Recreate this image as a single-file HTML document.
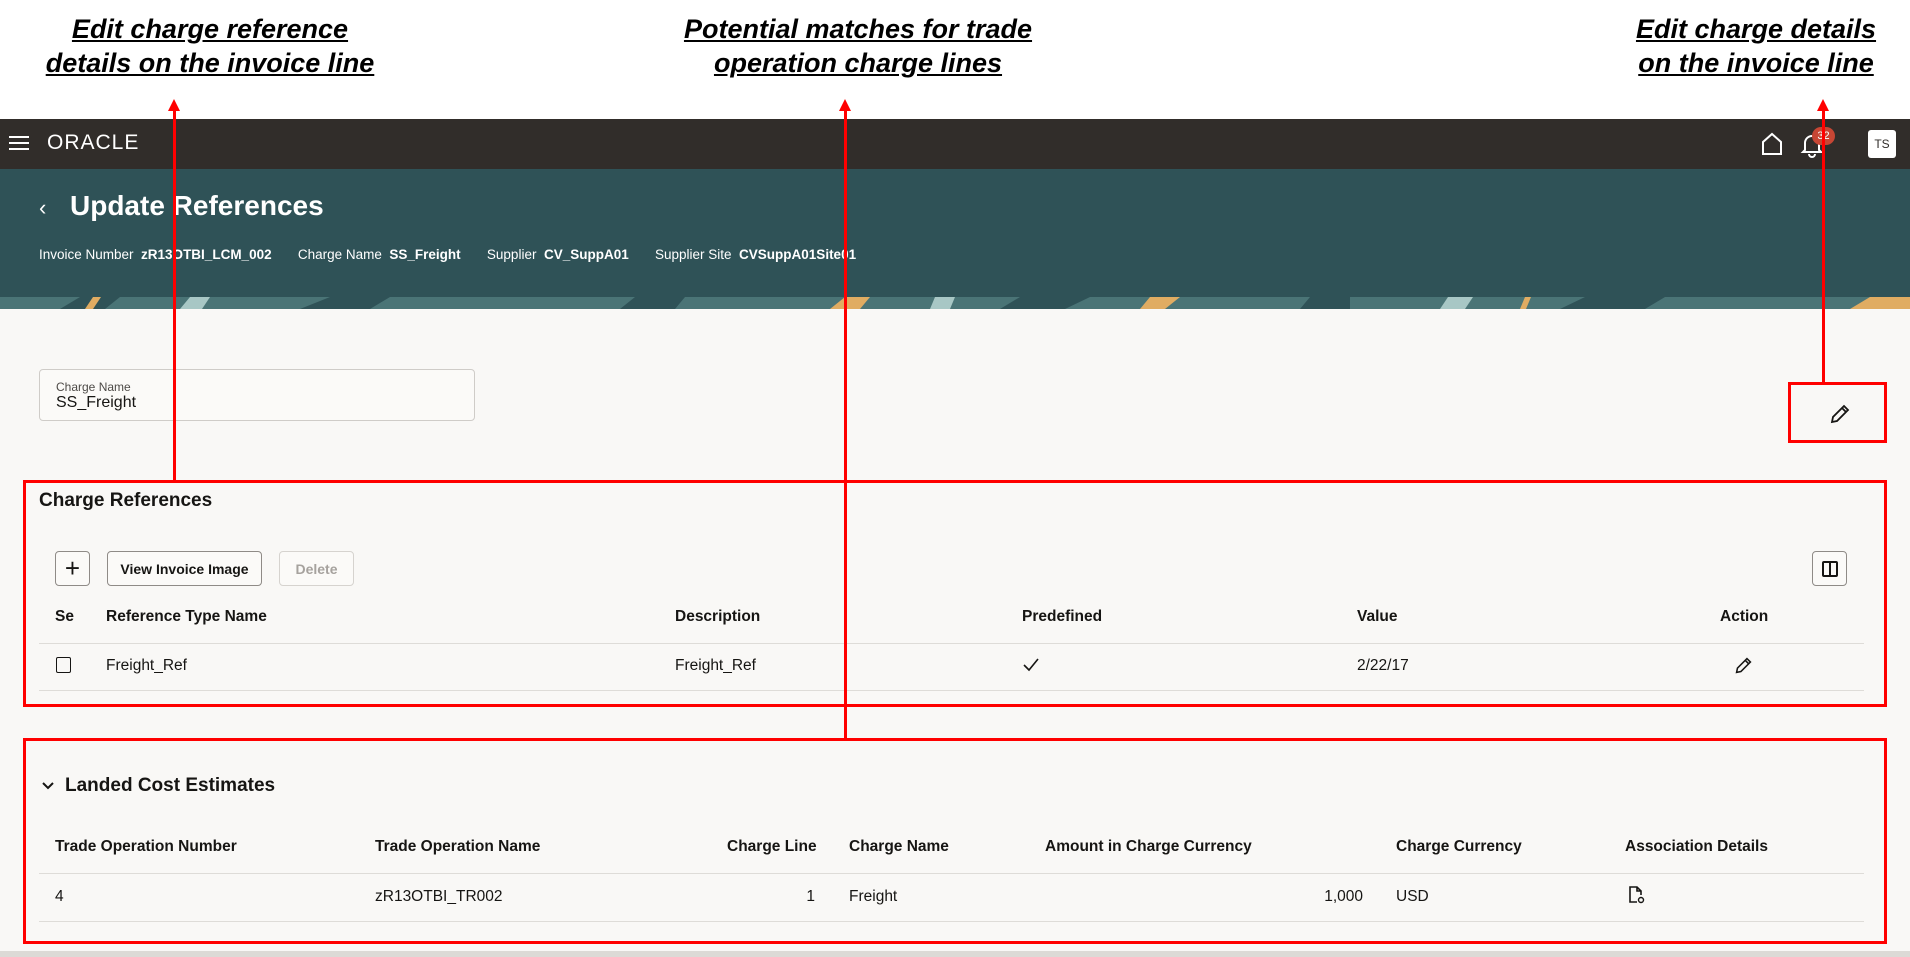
<!DOCTYPE html>
<html><head><meta charset="utf-8"><style>
*{margin:0;padding:0;box-sizing:border-box}
body{width:1910px;height:957px;position:relative;overflow:hidden;background:#fff;font-family:"Liberation Sans",sans-serif;color:#161513}
.a{position:absolute}
.ann{position:absolute;font-weight:bold;font-style:italic;text-decoration:underline;font-size:27px;line-height:34px;text-align:center;color:#000;white-space:nowrap;transform:translateX(-50%)}
.rv{position:absolute;width:3px;background:#f00}
.arr{position:absolute;width:0;height:0;border-left:6px solid transparent;border-right:6px solid transparent;border-bottom:12px solid #f00}
.rb{position:absolute;border:3px solid #f00}
.th{position:absolute;font-size:15.5px;font-weight:bold;color:#161513;white-space:nowrap}
.td{position:absolute;font-size:15.5px;color:#161513;white-space:nowrap}
.hl{position:absolute;height:1px;background:#dedcd8}
.btn{position:absolute;border:1px solid #8f8b87;border-radius:4px;background:#fbfaf8;font-size:14px;font-weight:bold;display:flex;align-items:center;justify-content:center}
</style></head><body>
<div class="ann" style="left:210px;top:12px">Edit charge reference<br>details on the invoice line</div>
<div class="ann" style="left:858px;top:12px">Potential matches for trade<br>operation charge lines</div>
<div class="ann" style="left:1756px;top:12px">Edit charge details<br>on the invoice line</div>

<div class="a" style="left:0;top:119px;width:1910px;height:50px;background:#312d2a"></div>
<div class="a" style="left:9px;top:136px;width:20px;height:2px;background:#fff;box-shadow:0 6px 0 #fff,0 12px 0 #fff"></div>
<div class="a" style="left:47px;top:131px;color:#fff;font-size:21px;letter-spacing:1px;font-weight:normal">ORACLE</div>
<svg class="a" style="left:1760px;top:132px" width="24" height="24" viewBox="0 0 24 24"><path d="M3 22V10L12 2L21 10V22Z" fill="none" stroke="#fff" stroke-width="2"/></svg>
<svg class="a" style="left:1800px;top:132px" width="24" height="26" viewBox="0 0 24 26"><path d="M5 18V11a7 7 0 0 1 14 0v7l2 2H3z M9 22a3 3 0 0 0 6 0" fill="none" stroke="#fff" stroke-width="2"/></svg>
<div class="a" style="left:1812px;top:127px;width:23px;height:18px;border-radius:9px;background:#c74634;color:#fff;font-size:11px;text-align:center;line-height:18px">32</div>
<div class="a" style="left:1868px;top:130px;width:28px;height:28px;border-radius:3px;background:#fff;color:#312d2a;font-size:12px;text-align:center;line-height:28px">TS</div>

<div class="a" style="left:0;top:169px;width:1910px;height:128px;background:#2f5257"></div>
<div class="a" style="left:0;top:297px;width:1910px;height:12px;background:#4a7476"></div>
<svg class="a" style="left:0;top:297px" width="1910" height="12" viewBox="0 0 1910 12">
<g fill="#2f5257"><path d="M60 12L80 0h40l-15 12z"/><path d="M300 12l30-12h60l-20 12z"/><path d="M620 12l15-12h50l-10 12z"/><path d="M1000 12l20-12h70l-25 12z"/><path d="M1300 12l10-12h40l0 12z"/><path d="M1560 12l25-12h80l-20 12z"/></g>
<g fill="#e0ac62"><path d="M85 12l8-12h8l-8 12z"/><path d="M1140 12l10-12h30l-15 12z"/><path d="M1520 12l5-12h6l-5 12z"/><path d="M1850 12l20-12h40v12z"/><path d="M830 12l15-12h25l-10 12z"/></g>
<g fill="#a8c7c5"><path d="M180 12l10-12h20l-8 12z"/><path d="M930 12l5-12h20l-5 12z"/><path d="M1440 12l8-12h25l-8 12z"/></g>
</svg>
<div class="a" style="left:39px;top:195px;color:#fff;font-size:22px">‹</div>
<div class="a" style="left:70px;top:190px;color:#fff;font-size:28px;font-weight:bold">Update References</div>
<div class="a" style="left:39px;top:247px;color:#fff;font-size:13.5px;white-space:nowrap">Invoice Number&nbsp; <b>zR13OTBI_LCM_002</b>&nbsp;&nbsp;&nbsp;&nbsp;&nbsp;&nbsp; Charge Name&nbsp; <b>SS_Freight</b>&nbsp;&nbsp;&nbsp;&nbsp;&nbsp;&nbsp; Supplier&nbsp; <b>CV_SuppA01</b>&nbsp;&nbsp;&nbsp;&nbsp;&nbsp;&nbsp; Supplier Site&nbsp; <b>CVSuppA01Site01</b></div>

<div class="a" style="left:0;top:309px;width:1910px;height:642px;background:#f9f8f6"></div>
<div class="a" style="left:0;top:951px;width:1910px;height:6px;background:#dcdad6"></div>

<div class="a" style="left:39px;top:369px;width:436px;height:52px;border:1px solid #cfccc8;border-radius:4px;background:#fbfaf8"></div>
<div class="a" style="left:56px;top:380px;font-size:12px;color:#4d4a47">Charge Name</div>
<div class="a" style="left:56px;top:394px;font-size:16px">SS_Freight</div>

<svg class="a" style="left:1829px;top:403px" width="22" height="22" viewBox="0 0 22 22"><path d="M3 19l1-5L15 3l4 4L8 18z M13 5l4 4" fill="none" stroke="#161513" stroke-width="1.8"/></svg>

<div class="a" style="left:39px;top:490px;font-size:19px;font-weight:bold">Charge References</div>
<div class="btn" style="left:55px;top:551px;width:35px;height:35px;font-size:26px;font-weight:normal">+</div>
<div class="btn" style="left:107px;top:551px;width:155px;height:35px">View Invoice Image</div>
<div class="btn" style="left:279px;top:551px;width:75px;height:35px;color:#a6a29e;border-color:#d6d3cf">Delete</div>
<div class="btn" style="left:1812px;top:551px;width:35px;height:35px"><div style="width:16px;height:16px;border:2px solid #161513;border-radius:2px;position:relative"><div style="position:absolute;left:5px;top:0;width:2px;height:12px;background:#161513"></div></div></div>

<div class="th" style="left:55px;top:608px">Se</div>
<div class="th" style="left:106px;top:608px">Reference Type Name</div>
<div class="th" style="left:675px;top:608px">Description</div>
<div class="th" style="left:1022px;top:608px">Predefined</div>
<div class="th" style="left:1357px;top:608px">Value</div>
<div class="th" style="left:1720px;top:608px">Action</div>
<div class="hl" style="left:39px;top:643px;width:1825px"></div>
<div class="a" style="left:56px;top:657px;width:15px;height:16px;border:1.5px solid #161513;border-radius:2px"></div>
<div class="td" style="left:106px;top:657px">Freight_Ref</div>
<div class="td" style="left:675px;top:657px">Freight_Ref</div>
<svg class="a" style="left:1022px;top:657px" width="18" height="16" viewBox="0 0 18 16"><path d="M2 8l5 5L16 2" fill="none" stroke="#161513" stroke-width="1.6"/></svg>
<div class="td" style="left:1357px;top:657px">2/22/17</div>
<svg class="a" style="left:1734px;top:656px" width="19" height="19" viewBox="0 0 22 22"><path d="M3 19l1-5L15 3l4 4L8 18z M13 5l4 4" fill="none" stroke="#161513" stroke-width="1.8"/></svg>
<div class="hl" style="left:39px;top:690px;width:1825px"></div>

<svg class="a" style="left:41px;top:781px" width="14" height="10" viewBox="0 0 14 10"><path d="M2 2l5 5 5-5" fill="none" stroke="#161513" stroke-width="2"/></svg>
<div class="a" style="left:65px;top:775px;font-size:19px;font-weight:bold">Landed Cost Estimates</div>
<div class="th" style="left:55px;top:838px">Trade Operation Number</div>
<div class="th" style="left:375px;top:838px">Trade Operation Name</div>
<div class="th" style="left:727px;top:838px">Charge Line</div>
<div class="th" style="left:849px;top:838px">Charge Name</div>
<div class="th" style="left:1045px;top:838px">Amount in Charge Currency</div>
<div class="th" style="left:1396px;top:838px">Charge Currency</div>
<div class="th" style="left:1625px;top:838px">Association Details</div>
<div class="hl" style="left:39px;top:873px;width:1825px"></div>
<div class="td" style="left:55px;top:888px">4</div>
<div class="td" style="left:375px;top:888px">zR13OTBI_TR002</div>
<div class="td" style="right:1095px;top:888px">1</div>
<div class="td" style="left:849px;top:888px">Freight</div>
<div class="td" style="right:547px;top:888px">1,000</div>
<div class="td" style="left:1396px;top:888px">USD</div>
<svg class="a" style="left:1628px;top:885px" width="18" height="20" viewBox="0 0 18 20"><path d="M9 17H2V2h7l4 4v4 M9 2v4h4" fill="none" stroke="#161513" stroke-width="1.6"/><circle cx="13" cy="15" r="2.5" fill="none" stroke="#161513" stroke-width="1.4"/></svg>
<div class="hl" style="left:39px;top:921px;width:1825px"></div>

<div class="rb" style="left:1788px;top:382px;width:99px;height:61px"></div>
<div class="rb" style="left:23px;top:480px;width:1864px;height:227px"></div>
<div class="rb" style="left:23px;top:738px;width:1864px;height:206px"></div>
<div class="rv" style="left:173px;top:108px;height:372px"></div>
<div class="arr" style="left:168px;top:99px"></div>
<div class="rv" style="left:844px;top:108px;height:630px"></div>
<div class="arr" style="left:839px;top:99px"></div>
<div class="rv" style="left:1822px;top:108px;height:274px"></div>
<div class="arr" style="left:1817px;top:99px"></div>
</body></html>
